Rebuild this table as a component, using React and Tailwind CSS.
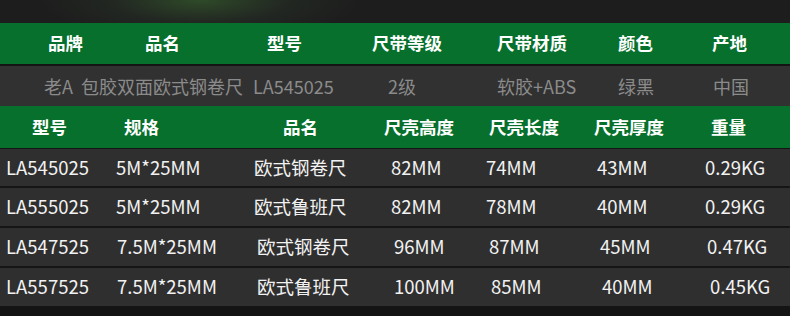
import React from "react";

const font = { fontFamily: '"Noto Sans CJK SC", "Noto Sans", sans-serif' };

function Cells({ cells }) {
  return cells.map(([cls, text], i) => (
    <div key={i} className={cls + " shrink-0 whitespace-nowrap"}>
      {text}
    </div>
  ));
}

export default function App() {
  return (
    <div
      className="w-[790px] h-[316px] overflow-hidden flex flex-col bg-[#161616]"
      style={font}
    >
      <div className="h-[23px] shrink-0 bg-[radial-gradient(ellipse_160px_40px_at_200px_0px,#2e4a28_0%,#222722_55%,#1d1d1d_100%)]" />
      <div className="h-[41px] shrink-0 bg-[#06702c] flex items-center pl-[48px] text-white font-bold text-[17.5px]">
        <Cells
          cells={[
            ["w-[97px]", "品牌"],
            ["w-[122px]", "品名"],
            ["w-[105px]", "型号"],
            ["w-[125px]", "尺带等级"],
            ["w-[121px]", "尺带材质"],
            ["w-[94px]", "颜色"],
            ["w-[60px]", "产地"],
          ]}
        />
      </div>
      <div className="h-[2px] shrink-0 bg-[#141414]" />
      <div className="h-[40px] shrink-0 bg-[#313131] flex items-center pl-[44px] text-[#8b8b8b] text-[18px]">
        <Cells
          cells={[
            ["w-[37px]", "老A"],
            ["w-[172px]", "包胶双面欧式钢卷尺"],
            ["w-[135px]", "LA545025"],
            ["w-[109px]", "2级"],
            ["w-[121px]", "软胶+ABS"],
            ["w-[95px]", "绿黑"],
            ["w-[60px]", "中国"],
          ]}
        />
      </div>
      <div className="h-[42px] shrink-0 bg-[#06702c] flex items-center pl-[32px] text-white font-bold text-[17.5px]">
        <Cells
          cells={[
            ["w-[92px]", "型号"],
            ["w-[159px]", "规格"],
            ["w-[101px]", "品名"],
            ["w-[105px]", "尺壳高度"],
            ["w-[105px]", "尺壳长度"],
            ["w-[117px]", "尺壳厚度"],
            ["w-[60px]", "重量"],
          ]}
        />
      </div>
      <div className="h-[1px] shrink-0 bg-[#141414]" />
      <div className="h-[37px] shrink-0 bg-[#2f2f2f] flex items-center pl-[6px] text-[#f2f2f2] text-[18.5px]">
        <Cells
          cells={[
            ["w-[110px]", "LA545025"],
            ["w-[138px]", "5M*25MM"],
            ["w-[137px]", "欧式钢卷尺"],
            ["w-[95px]", "82MM"],
            ["w-[111px]", "74MM"],
            ["w-[108px]", "43MM"],
            ["w-[70px]", "0.29KG"],
          ]}
        />
      </div>
      <div className="h-[2px] shrink-0 bg-[#151515]" />
      <div className="h-[38px] shrink-0 bg-[#2f2f2f] flex items-center pl-[6px] text-[#f2f2f2] text-[18.5px]">
        <Cells
          cells={[
            ["w-[110px]", "LA555025"],
            ["w-[138px]", "5M*25MM"],
            ["w-[137px]", "欧式鲁班尺"],
            ["w-[95px]", "82MM"],
            ["w-[111px]", "78MM"],
            ["w-[108px]", "40MM"],
            ["w-[70px]", "0.29KG"],
          ]}
        />
      </div>
      <div className="h-[2px] shrink-0 bg-[#151515]" />
      <div className="h-[38px] shrink-0 bg-[#2f2f2f] flex items-center pl-[6px] text-[#f2f2f2] text-[18.5px]">
        <Cells
          cells={[
            ["w-[111px]", "LA547525"],
            ["w-[140px]", "7.5M*25MM"],
            ["w-[137px]", "欧式钢卷尺"],
            ["w-[95px]", "96MM"],
            ["w-[111px]", "87MM"],
            ["w-[107px]", "45MM"],
            ["w-[70px]", "0.47KG"],
          ]}
        />
      </div>
      <div className="h-[2px] shrink-0 bg-[#151515]" />
      <div className="h-[38px] shrink-0 bg-[#2f2f2f] flex items-center pl-[6px] text-[#f2f2f2] text-[18.5px]">
        <Cells
          cells={[
            ["w-[111px]", "LA557525"],
            ["w-[140px]", "7.5M*25MM"],
            ["w-[137px]", "欧式鲁班尺"],
            ["w-[97px]", "100MM"],
            ["w-[111px]", "85MM"],
            ["w-[108px]", "40MM"],
            ["w-[70px]", "0.45KG"],
          ]}
        />
      </div>
      <div className="flex-1 bg-[#141414]" />
    </div>
  );
}
